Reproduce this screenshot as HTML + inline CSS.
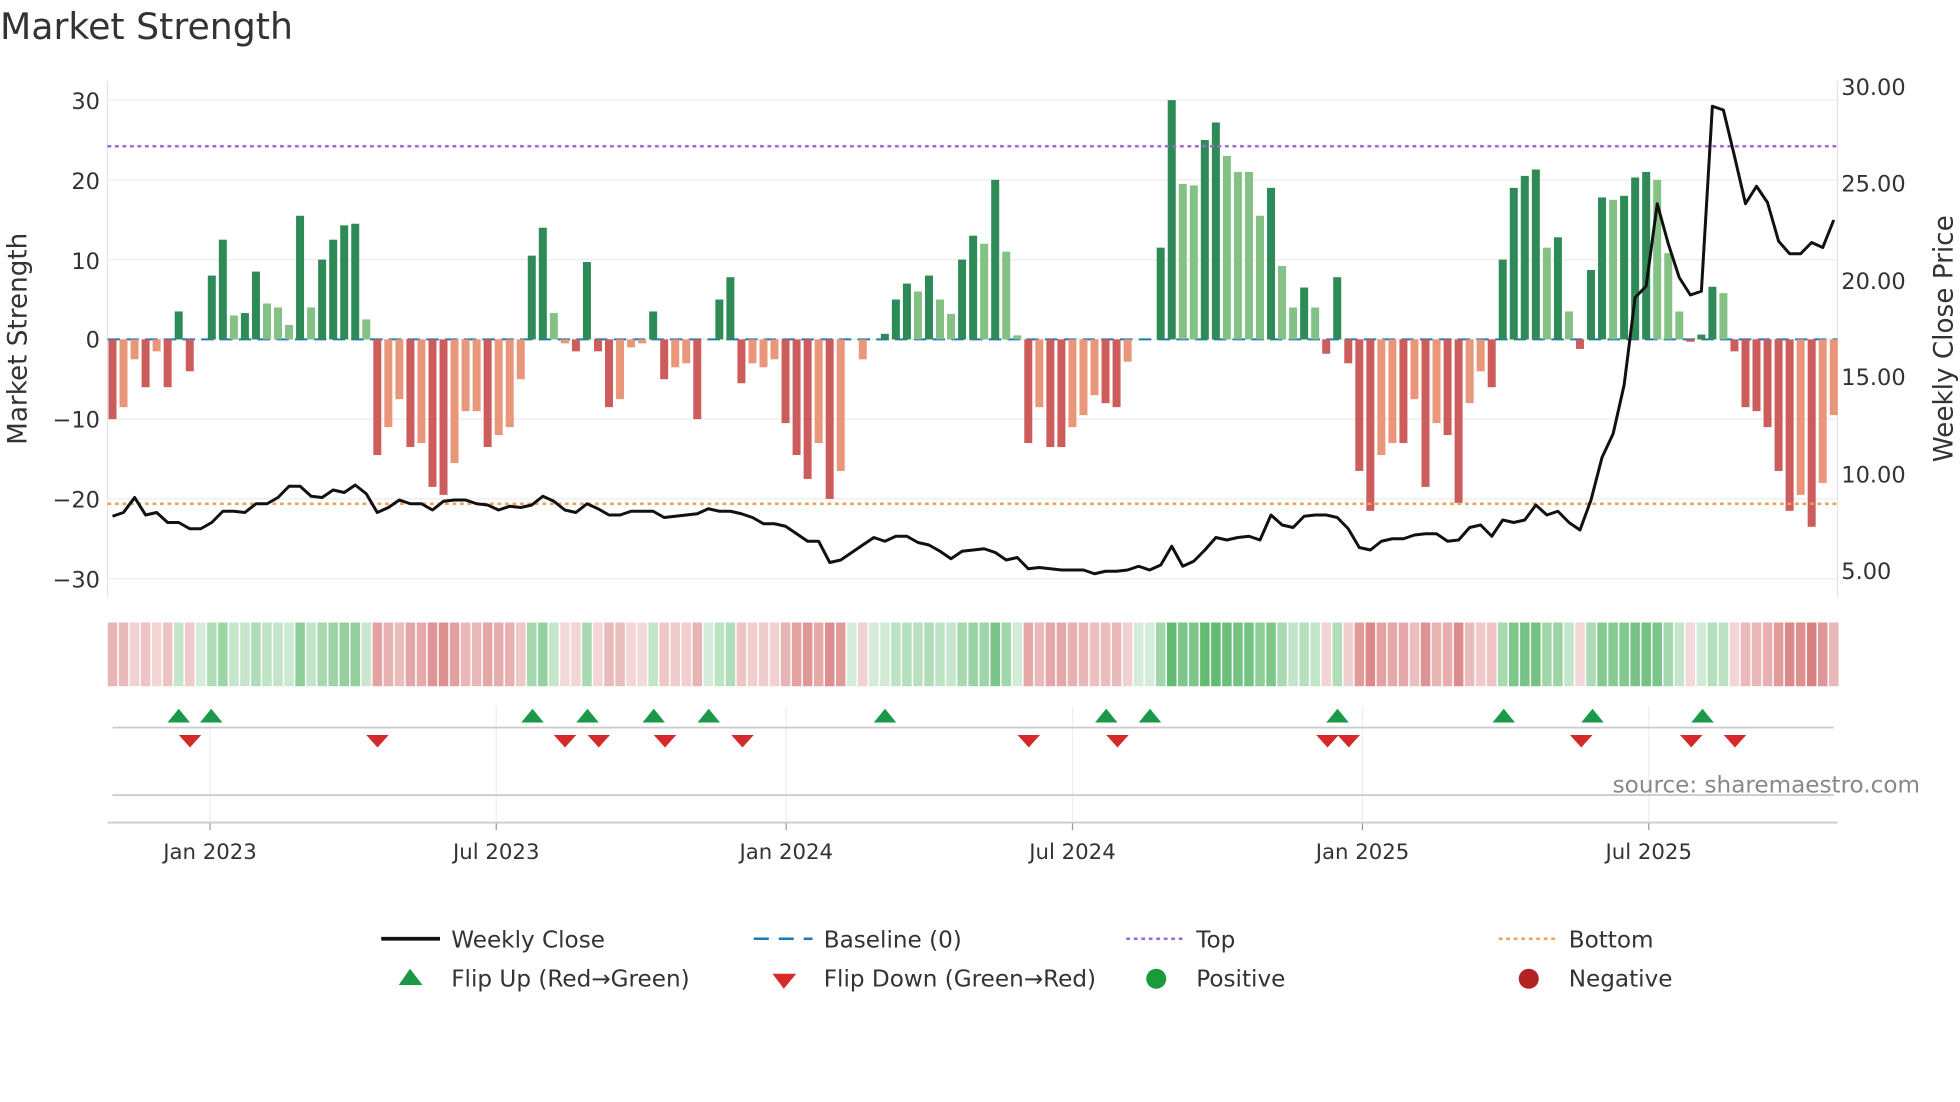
<!DOCTYPE html>
<html><head><meta charset="utf-8"><style>
html,body{margin:0;padding:0;background:#fff;width:1960px;height:1102px;overflow:hidden}
svg{display:block}
text{font-family:"DejaVu Sans","Liberation Sans",sans-serif;fill:#333}
</style></head><body>
<svg id="s" width="1960" height="1102" viewBox="0 0 1568 881.6" xmlns="http://www.w3.org/2000/svg">
<text x="0" y="31" font-size="29">Market Strength</text>
<g id="grid"></g>
<g id="bars"></g>
<g id="heat"></g>
<g id="marks"></g>
<line x1="86" y1="117" x2="1470" y2="117" stroke="#9b6ad8" stroke-width="2" stroke-dasharray="3,3"/>
<line x1="86" y1="403" x2="1470" y2="403" stroke="#f0a05a" stroke-width="2" stroke-dasharray="3,3"/>
<polyline id="price" fill="none" stroke="#111" stroke-width="2.4" stroke-linejoin="round"/>
<g font-size="18">
<text x="80" y="87" text-anchor="end">30</text>
<text x="80" y="151" text-anchor="end">20</text>
<text x="80" y="215" text-anchor="end">10</text>
<text x="80" y="278" text-anchor="end">0</text>
<text x="80" y="342" text-anchor="end">−10</text>
<text x="80" y="406" text-anchor="end">−20</text>
<text x="80" y="470" text-anchor="end">−30</text>
<text x="1473" y="76">30.00</text>
<text x="1473" y="153">25.00</text>
<text x="1473" y="231">20.00</text>
<text x="1473" y="308">15.00</text>
<text x="1473" y="386">10.00</text>
<text x="1473" y="463">5.00</text>
<text transform="translate(21,271) rotate(-90)" text-anchor="middle" font-size="21">Market Strength</text>
<text transform="translate(1562,271) rotate(-90)" text-anchor="middle" font-size="21">Weekly Close Price</text>
<text x="168" y="687" text-anchor="middle" font-size="17">Jan 2023</text>
<text x="397" y="687" text-anchor="middle" font-size="17">Jul 2023</text>
<text x="629" y="687" text-anchor="middle" font-size="17">Jan 2024</text>
<text x="858" y="687" text-anchor="middle" font-size="17">Jul 2024</text>
<text x="1090" y="687" text-anchor="middle" font-size="17">Jan 2025</text>
<text x="1319" y="687" text-anchor="middle" font-size="17">Jul 2025</text>
<text x="1536" y="634" text-anchor="end" font-size="18.5" style="fill:#888">source: sharemaestro.com</text>
</g>
<g font-size="18.5">
<line x1="305" y1="751" x2="352" y2="751" stroke="#111" stroke-width="3"/>
<text x="361" y="758">Weekly Close</text>
<line x1="603" y1="751" x2="650" y2="751" stroke="#1f77b4" stroke-width="2" stroke-dasharray="12,8"/>
<text x="659" y="758">Baseline (0)</text>
<line x1="901" y1="751" x2="948" y2="751" stroke="#9b6ad8" stroke-width="2" stroke-dasharray="3,3"/>
<text x="957" y="758">Top</text>
<line x1="1199" y1="751" x2="1246" y2="751" stroke="#f0a05a" stroke-width="2" stroke-dasharray="3,3"/>
<text x="1255" y="758">Bottom</text>
<polygon points="328,775 319,788 338,788" fill="#1a9a48"/>
<text x="361" y="789">Flip Up (Red→Green)</text>
<polygon points="618,779 637,779 627,791" fill="#d62a2a"/>
<text x="659" y="789">Flip Down (Green→Red)</text>
<circle cx="925" cy="783" r="8" fill="#1a9a38"/>
<text x="957" y="789">Positive</text>
<circle cx="1223" cy="783" r="8" fill="#b22222"/>
<text x="1255" y="789">Negative</text>
</g>
</svg>
<script>
const NS="http://www.w3.org/2000/svg";
function el(p,t,a){const e=document.createElementNS(NS,t);for(const k in a)e.setAttribute(k,a[k]);document.getElementById(p).appendChild(e);return e;}
for(let v=-30;v<=30;v+=10){const y=271.5-v*6.38;el("grid","line",{x1:86,x2:1470,y1:y,y2:y,stroke:"#ececec","stroke-width":1});}
el("grid","line",{x1:86,x2:86,y1:65,y2:478,stroke:"#e4e4e4"});
el("grid","line",{x1:1470,x2:1470,y1:65,y2:478,stroke:"#e4e4e4"});
[168,397,629,858,1090,1319].forEach(x=>{el("grid","line",{x1:x,x2:x,y1:565,y2:658,stroke:"#eee"});el("grid","line",{x1:x,x2:x,y1:658,y2:664,stroke:"#999"});});
el("grid","line",{x1:90,x2:1467,y1:582,y2:582,stroke:"#ccc","stroke-width":1.5});
el("grid","line",{x1:90,x2:1467,y1:636,y2:636,stroke:"#ccc","stroke-width":1.5});
el("grid","line",{x1:86,x2:1470,y1:658,y2:658,stroke:"#ccc","stroke-width":1.5});
el("grid","line",{x1:86,x2:1470,y1:271.5,y2:271.5,stroke:"#1f77b4","stroke-width":1.6,"stroke-dasharray":"10,5"});
const B=[[-10,1],[-8.5,0],[-2.5,0],[-6,1],[-1.5,0],[-6,1],[3.5,1],[-4,1],[0,0],[8,1],[12.5,1],[3,0],[3.3,1],[8.5,1],[4.5,0],[4,0],[1.8,0],[15.5,1],[4,0],[10,1],[12.5,1],[14.3,1],[14.5,1],[2.5,0],
[-14.5,1],[-11,0],[-7.5,0],[-13.5,1],[-13,0],[-18.5,1],[-19.5,1],[-15.5,0],[-9,0],[-9,0],[-13.5,1],[-12,0],[-11,0],[-5,0],[10.5,1],[14,1],[3.3,0],[-0.5,0],[-1.5,1],[9.7,1],[-1.5,1],[-8.5,1],[-7.5,0],[-1,0],[-0.5,0],[3.5,1],[-5,1],[-3.5,0],[-3,0],[-10,1],[0,0],[5,1],[7.8,1],[-5.5,1],[-3,0],[-3.5,0],[-2.5,0],[-10.5,1],[-14.5,1],[-17.5,1],[-13,0],[-20,1],[-16.5,0],[0,0],[-2.5,0],[0,0],[0.7,1],[5,1],[7,1],[6,0],[8,1],[5,0],[3.2,0],[10,1],[13,1],[12,0],[20,1],[11,0],[0.5,0],
[-13,1],[-8.5,0],[-13.5,1],[-13.5,1],[-11,0],[-9.5,0],[-7,0],[-8,1],[-8.5,1],[-2.8,0],[0,0],[0,0],[11.5,1],[30,1],[19.5,0],[19.3,0],[25,1],[27.2,1],[23,0],[21,0],[21,0],[15.5,0],[19,1],[9.2,0],[4,0],[6.5,1],[4,0],[-1.8,1],[7.8,1],[-3,1],[-16.5,1],[-21.5,1],[-14.5,0],[-13,0],[-13,1],[-7.5,0],[-18.5,1],[-10.5,0],[-12,1],[-20.5,1],[-8,0],[-4,0],[-6,1],[10,1],[19,1],[20.5,1],[21.3,1],[11.5,0],[12.8,1],[3.5,0],[-1.2,1],[8.7,1],[17.8,1],[17.5,0],[18,1],[20.3,1],[21,1],[20,0],[10.8,0],[3.5,0],[-0.3,1],[0.6,1],[6.6,1],[5.8,0],[-1.5,1],[-8.5,1],[-9,1],[-11,1],[-16.5,1],[-21.5,1],[-19.5,0],[-23.5,1],[-18,0],[-9.5,0]];
const step=(1467-90)/(B.length-1);
B.forEach((b,i)=>{const x=90+i*step,v=b[0];const h=Math.abs(v)*6.38;
 let c=v>=0?(b[1]?"#2e8b57":"#84c184"):(b[1]?"#cd5c5c":"#e9967a");
 if(Math.abs(v)>0.2)el("bars","rect",{x:x-3.2,y:v>=0?271.5-h:271.5,width:6.4,height:h,fill:c});
 const m=Math.min(Math.abs(v)/25,1),a=0.22+0.58*m;
 const hc=v>=0?`rgba(60,170,80,${a})`:`rgba(205,90,90,${a})`;
 el("heat","rect",{x:x-4.4+0.6,y:498,width:step-1.2,height:51,fill:hc});
});
[143,169,426,470,523,567,708,885,920,1070,1203,1274,1362].forEach(x=>el("marks","polygon",{points:`${x},567 ${x-9},578 ${x+9},578`,fill:"#1a9a48"}));
[152,302,452,479,532,594,823,894,1062,1079,1265,1353,1388].forEach(x=>el("marks","polygon",{points:`${x-9},588 ${x+9},588 ${x},598`,fill:"#d62a2a"}));
const P=[413,410,398,412,410,418,418,423,423,418,409,409,410,403,403,398,389,389,397,398,392,394,388,395,410,406,400,403,403,408,401,400,400,403,404,408,405,406,404,397,401,408,410,403,407,412,412,409,409,409,414,413,412,411,407,409,409,411,414,419,419,421,427,433,433,450,448,442,436,430,433,429,429,434,436,441,447,441,440,439,442,448,446,455,454,455,456,456,456,459,457,457,456,453,456,452,437,453,449,440,430,432,430,429,432,412,420,422,413,412,412,414,423,438,440,433,431,431,428,427,427,433,432,422,420,429,416,418,416,404,412,409,418,424,400,366,347,308,238,229,163,195,222,236,233,85,88,125,163,149,162,193,203,203,194,198,176];
const ps=(1467-90)/(P.length-1);
document.getElementById("price").setAttribute("points",P.map((y,i)=>(90+i*ps).toFixed(1)+","+y).join(" "));
</script>
</body></html>
